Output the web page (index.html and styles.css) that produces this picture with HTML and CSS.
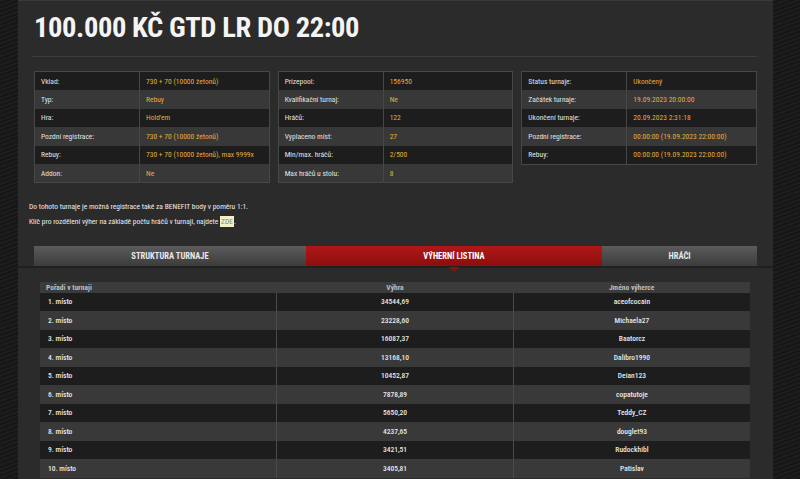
FILE: index.html
```html
<!DOCTYPE html>
<html lang="cs">
<head>
<meta charset="utf-8">
<title>100.000 KČ GTD LR DO 22:00</title>
<link rel="stylesheet" href="styles.css">
</head>
<body>
<div class="page">
  <h1 class="title">100.000 KČ GTD LR DO 22:00</h1>

  <div class="info">
    <table class="itab">
      <tr><td class="lab">Vklad:</td><td class="val">730 + 70 (10000 žetonů)</td></tr>
      <tr><td class="lab">Typ:</td><td class="val">Rebuy</td></tr>
      <tr><td class="lab">Hra:</td><td class="val">Hold'em</td></tr>
      <tr><td class="lab">Pozdní registrace:</td><td class="val">730 + 70 (10000 žetonů)</td></tr>
      <tr><td class="lab">Rebuy:</td><td class="val">730 + 70 (10000 žetonů), max 9999x</td></tr>
      <tr><td class="lab">Addon:</td><td class="val">Ne</td></tr>
    </table>
    <table class="itab">
      <tr><td class="lab">Prizepool:</td><td class="val">156950</td></tr>
      <tr><td class="lab">Kvalifikační turnaj:</td><td class="val">Ne</td></tr>
      <tr><td class="lab">Hráčů:</td><td class="val">122</td></tr>
      <tr><td class="lab">Vyplaceno míst:</td><td class="val">27</td></tr>
      <tr><td class="lab">Min/max. hráčů:</td><td class="val">2/500</td></tr>
      <tr><td class="lab">Max hráčů u stolu:</td><td class="val">8</td></tr>
    </table>
    <table class="itab">
      <tr><td class="lab">Status turnaje:</td><td class="val">Ukončený</td></tr>
      <tr><td class="lab">Začátek turnaje:</td><td class="val">19.09.2023 20:00:00</td></tr>
      <tr><td class="lab">Ukončení turnaje:</td><td class="val">20.09.2023 2:31:18</td></tr>
      <tr><td class="lab">Pozdní registrace:</td><td class="val">00:00:00 (19.09.2023 22:00:00)</td></tr>
      <tr><td class="lab">Rebuy:</td><td class="val">00:00:00 (19.09.2023 22:00:00)</td></tr>
    </table>
  </div>

  <div class="notes">
    <p>Do tohoto turnaje je možná registrace také za BENEFIT body v poměru 1:1.</p>
    <p>Klíč pro rozdělení výher na základě počtu hráčů v turnaji, najdete <a class="here" href="#">ZDE</a>.</p>
  </div>

  <div class="tabs">
    <div class="tab t1">STRUKTURA TURNAJE</div>
    <div class="tab t2 active">VÝHERNÍ LISTINA</div>
    <div class="tab t3">HRÁČI</div>
  </div>

  <div class="results">
    <table class="rtab">
      <thead>
        <tr><th class="c1">Pořadí v turnaji</th><th>Výhra</th><th>Jméno výherce</th></tr>
      </thead>
      <tbody>
        <tr><td class="c1">1. místo</td><td>34544,69</td><td>aceofcocain</td></tr>
        <tr><td class="c1">2. místo</td><td>23228,60</td><td>Michaela27</td></tr>
        <tr><td class="c1">3. místo</td><td>16087,37</td><td>Baatorcz</td></tr>
        <tr><td class="c1">4. místo</td><td>13168,10</td><td>Dalibro1990</td></tr>
        <tr><td class="c1">5. místo</td><td>10452,87</td><td>Deian123</td></tr>
        <tr><td class="c1">6. místo</td><td>7878,89</td><td>copatutoje</td></tr>
        <tr><td class="c1">7. místo</td><td>5650,20</td><td>Teddy_CZ</td></tr>
        <tr><td class="c1">8. místo</td><td>4237,65</td><td>douglet93</td></tr>
        <tr><td class="c1">9. místo</td><td>3421,51</td><td>Rudockhibl</td></tr>
        <tr><td class="c1">10. místo</td><td>3405,81</td><td>Patislav</td></tr>
      </tbody>
    </table>
  </div>
</div>
</body>
</html>
```
FILE: styles.css
```css
* { box-sizing: border-box; }
html, body { margin: 0; padding: 0; }
body {
  background: #1a1a1a;
  background-image: repeating-linear-gradient(160deg, #1d1d1d 0 2px, #161616 2px 4px);
  font-family: "Roboto", "Liberation Sans", sans-serif;
  font-stretch: 75%;
  color: #e6e6e6;
  height: 479px;
  overflow: hidden;
}
.page {
  width: 755px;
  margin-left: 18px;
  background: #2b2b2b;
  min-height: 479px;
  border-top: 1px solid #3a3a3a;
}
.title {
  margin: 0 16px 0 14px;
  padding: 9px 0 10px 2px;
  font-family: "Roboto", sans-serif;
  font-stretch: 75%;
  font-weight: 700;
  font-size: 28.5px;
  letter-spacing: -0.4px;
  line-height: 36px;
  color: #f4f4f4;
  border-bottom: 1px solid #3c3c3c;
}
.info {
  display: flex;
  align-items: flex-start;
  gap: 8px;
  margin: 14px 16px 0 16px;
}
.itab {
  flex: 1;
  border-collapse: collapse;
  border: 1px solid #474747;
  font-size: 7.5px;
}
.itab tr { height: 18.5px; }
.itab tr:nth-child(odd) { background: #1d1d1d; }
.itab tr:nth-child(even) { background: #383838; }
.itab td { padding: 0 6px; white-space: nowrap; }
.itab .lab { width: 105px; color: #e2e2e2; border-right: 1px solid #474747; }
.itab .val { color: #e3ad3a; }

.notes {
  margin: 16px 0 0 11px;
  font-size: 7.5px;
  color: #ececec;
}
.notes p { margin: 0; line-height: 15px; }
.here {
  color: #8a8a5a;
  background: #f2f0c8;
  text-decoration: none;
  padding: 1px 1px;
}

.tabs {
  display: flex;
  margin-top: 17px;
  padding: 0 16px;
  border-bottom: 2px solid #202020;
}
.tab {
  height: 20px;
  line-height: 20px;
  text-align: center;
  font-size: 8.5px;
  font-weight: 700;
  color: #e8e8e8;
  background: linear-gradient(#5b5b5b, #3c3c3c);
  position: relative;
}
.t1 { width: 272px; }
.t2 { width: 296px; }
.t3 { flex: 1; }
.tab.active {
  background: linear-gradient(#b01818, #8c0e0e);
  color: #ffffff;
}
.tab.active::after {
  content: "";
  position: absolute;
  left: 50%;
  bottom: -6px;
  margin-left: -5px;
  border-left: 5px solid transparent;
  border-right: 5px solid transparent;
  border-top: 5px solid #8c0e0e;
}

.results { padding: 14px 23px 0 22px; }
.rtab {
  width: 100%;
  border-collapse: collapse;
  font-size: 7.5px;
  font-weight: 500;
}
.rtab th {
  height: 10.5px;
  padding: 0 6px;
  background: #3b3b3b;
  color: #bdbdbd;
  font-weight: 700;
  text-align: center;
}
.rtab th.c1 { text-align: left; }
.rtab td {
  height: 18.5px;
  padding: 0 8px;
  text-align: center;
  color: #e8e8e8;
  width: 33.33%;
}
.rtab td.c1 { text-align: left; border-right: 1px solid #4a4a4a; }
.rtab td:nth-child(2) { border-right: 1px solid #4a4a4a; }
.rtab tbody tr:nth-child(odd) { background: #1d1d1d; }
.rtab tbody tr:nth-child(even) { background: #393939; }
```
